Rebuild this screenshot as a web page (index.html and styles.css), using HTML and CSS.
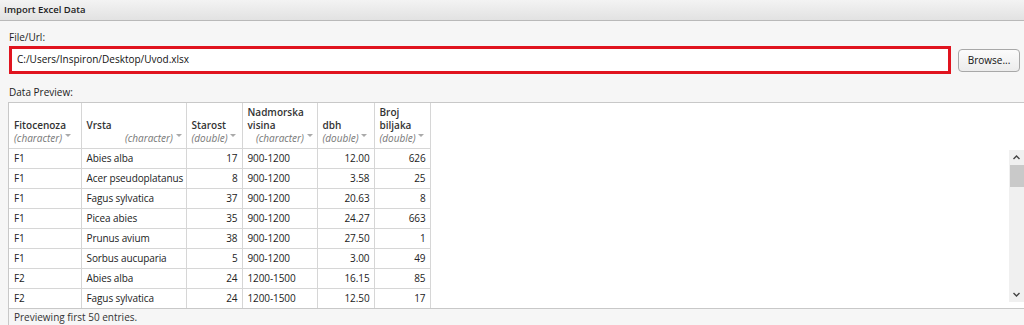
FILE: index.html
```html
<!DOCTYPE html>
<html lang="en">
<head>
    <meta charset="UTF-8">
    <title>Import Excel Data</title>
    <link rel="stylesheet" href="styles.css">
</head>
<body>
    <div class="dialog">
        <div class="titlebar">Import Excel Data</div>

        <div class="content">
            <label class="label">File/Url:</label>
            <div class="file-row">
                <div class="file-input">C:/Users/Inspiron/Desktop/Uvod.xlsx</div>
                <button class="browse">Browse...</button>
            </div>

            <label class="label preview-label">Data Preview:</label>
        </div>

        <div class="preview">
            <div class="grid-wrap">
                <table class="grid">
                    <thead>
                        <tr>
                            <th class="c1"><div class="name">Fitocenoza</div><div class="type">(character) <span class="tri"></span></div></th>
                            <th class="c2"><div class="name">Vrsta</div><div class="type right">(character) <span class="tri"></span></div></th>
                            <th class="c3"><div class="name">Starost</div><div class="type">(double) <span class="tri"></span></div></th>
                            <th class="c4"><div class="name">Nadmorska<br>visina</div><div class="type right">(character) <span class="tri"></span></div></th>
                            <th class="c5"><div class="name">dbh</div><div class="type">(double) <span class="tri"></span></div></th>
                            <th class="c6"><div class="name">Broj<br>biljaka</div><div class="type">(double) <span class="tri"></span></div></th>
                        </tr>
                    </thead>
                    <tbody>
                        <tr><td>F1</td><td>Abies alba</td><td class="num">17</td><td>900-1200</td><td class="num">12.00</td><td class="num">626</td></tr>
                        <tr><td>F1</td><td>Acer pseudoplatanus</td><td class="num">8</td><td>900-1200</td><td class="num">3.58</td><td class="num">25</td></tr>
                        <tr><td>F1</td><td>Fagus sylvatica</td><td class="num">37</td><td>900-1200</td><td class="num">20.63</td><td class="num">8</td></tr>
                        <tr><td>F1</td><td>Picea abies</td><td class="num">35</td><td>900-1200</td><td class="num">24.27</td><td class="num">663</td></tr>
                        <tr><td>F1</td><td>Prunus avium</td><td class="num">38</td><td>900-1200</td><td class="num">27.50</td><td class="num">1</td></tr>
                        <tr><td>F1</td><td>Sorbus aucuparia</td><td class="num">5</td><td>900-1200</td><td class="num">3.00</td><td class="num">49</td></tr>
                        <tr><td>F2</td><td>Abies alba</td><td class="num">24</td><td>1200-1500</td><td class="num">16.15</td><td class="num">85</td></tr>
                        <tr><td>F2</td><td>Fagus sylvatica</td><td class="num">24</td><td>1200-1500</td><td class="num">12.50</td><td class="num">17</td></tr>
                    </tbody>
                </table>
                <div class="scrollbar">
                    <svg class="arrow" width="15" height="15" viewBox="0 0 15 15"><path d="M4.5 9 L7.5 6 L10.5 9" fill="none" stroke="#444" stroke-width="1.4"/></svg>
                    <div class="thumb"></div>
                    <svg class="arrow down" width="15" height="15" viewBox="0 0 15 15"><path d="M4.5 6 L7.5 9 L10.5 6" fill="none" stroke="#444" stroke-width="1.4"/></svg>
                </div>
            </div>
            <div class="footer">Previewing first 50 entries.</div>
        </div>
    </div>
</body>
</html>
```

FILE: styles.css
```css
* {
    margin: 0;
    padding: 0;
    box-sizing: border-box;
}

body {
    font-family: 'Open Sans', 'Noto Sans', sans-serif;
    font-size: 10px;
    color: #111;
    background: #f6f6f6;
    width: 1024px;
    height: 325px;
    overflow: hidden;
}

.titlebar {
    height: 21px;
    line-height: 19px;
    padding-left: 4px;
    font-size: 9.5px;
    font-weight: 600;
    color: #222;
    background: linear-gradient(#f3f3f3, #e2e2e2);
    border-bottom: 1px solid #b9b9b9;
}

.content {
    padding: 8px 4px 0 9px;
}

.label {
    display: block;
    height: 17px;
    line-height: 16px;
    color: #222;
}

.file-row {
    display: flex;
    align-items: center;
    gap: 7px;
    height: 28px;
}

.file-input {
    flex: 1;
    height: 28px;
    line-height: 21px;
    padding-left: 5px;
    border: 3.5px solid #e0141f;
    background: #fff;
    font-size: 10px;
}

.browse {
    width: 62px;
    height: 23px;
    font-family: inherit;
    font-size: 10px;
    color: #111;
    background: linear-gradient(#fbfbfb, #ececec);
    border: 1px solid #a8a8a8;
    border-radius: 4px;
}

.preview-label {
    margin-top: 13px;
    height: 15px;
    line-height: 10px;
}

.preview {
    margin-left: 8px;
    border-left: 1px solid #c8c8c8;
    border-top: 1px solid #c8c8c8;
}

.grid-wrap {
    position: relative;
    height: 205px;
    overflow: hidden;
    background: #fff;
}

.grid {
    border-collapse: collapse;
    table-layout: fixed;
    width: 421px;
    background: #fff;
}

.grid th {
    height: 45px;
    vertical-align: bottom;
    text-align: left;
    padding: 0 4px 3px 5px;
    border-right: 1px solid #d6d6d6;
    border-bottom: 1px solid #d6d6d6;
    font-weight: 600;
    line-height: 13px;
}

.grid th .name {
    color: #333;
}

.grid th .type {
    font-weight: 400;
    font-style: italic;
    font-size: 10px;
    color: #777;
    white-space: nowrap;
}

.grid th .type.right {
    text-align: right;
}

.tri {
    display: inline-block;
    width: 0;
    height: 0;
    border-left: 3px solid transparent;
    border-right: 3px solid transparent;
    border-top: 3px solid #aaa;
    vertical-align: 5px;
}

.c1 { width: 72px; }
.c2 { width: 105px; }
.c3 { width: 56px; }
.c4 { width: 75px; }
.c5 { width: 57px; }
.c6 { width: 56px; }

.grid td {
    height: 20px;
    padding: 0 4px 0 5px;
    border-right: 1px solid #d6d6d6;
    border-bottom: 1px solid #d6d6d6;
    white-space: nowrap;
    overflow: hidden;
    color: #222;
    letter-spacing: -0.1px;
}

.grid td.num {
    text-align: right;
}

.scrollbar {
    position: absolute;
    right: 0;
    top: 47px;
    width: 15px;
    height: 152px;
    background: #f0f0f0;
    display: flex;
    flex-direction: column;
    align-items: center;
}

.arrow {
    display: block;
    flex: none;
}

.thumb {
    width: 14px;
    height: 22px;
    background: #c9c9c9;
}

.down {
    margin-top: auto;
}

.footer {
    height: 18px;
    line-height: 17px;
    padding-left: 5px;
    border-top: 1px solid #c8c8c8;
    background: #f6f6f6;
    color: #333;
}
```
